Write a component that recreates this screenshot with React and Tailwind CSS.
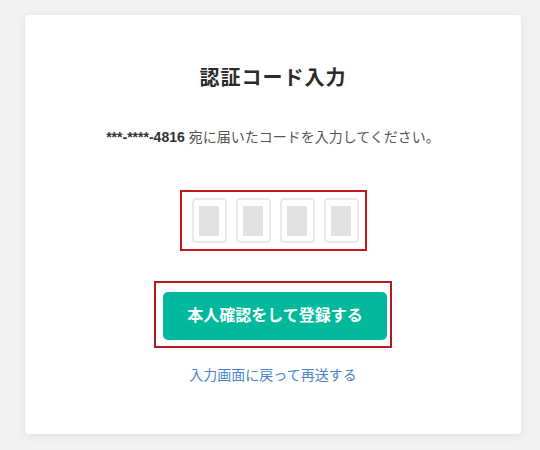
import React from "react";

const jp = { fontFamily: '"Liberation Sans", "Noto Sans CJK JP", sans-serif' };

function CodeBox() {
  return (
    <div className="w-[35px] h-[45px] border-2 border-[#e9e9e9] rounded-[4px] flex items-center justify-center bg-white">
      <div className="w-[20px] h-[30px] bg-[#e2e2e2]"></div>
    </div>
  );
}

export default function App() {
  return (
    <div className="w-[540px] h-[450px] bg-[#f2f2f2] pt-[15px] pl-[25px]" style={jp}>
      <div className="w-[496px] h-[419px] bg-white rounded-[4px] shadow-[0_2px_10px_rgba(0,0,0,0.08)] flex flex-col items-center pt-[49px]">
        <h1 className="text-[20px] leading-[28px] font-bold tracking-[1px] text-[#2b2b2b]">認証コード入力</h1>
        <p className="mt-[35px] text-[14px] leading-[20px] text-[#555]">
          <span className="font-bold text-[#333]">***-****-4816</span> 宛に届いたコードを入力してください。
        </p>
        <div className="mt-[43px] border-2 border-[#c0181c] pl-[10px] pr-[6px] py-[6px] flex gap-[9px]">
          <CodeBox />
          <CodeBox />
          <CodeBox />
          <CodeBox />
        </div>
        <div className="mt-[30px] border-2 border-[#b3191d] pt-[9px] pb-[6px] pl-[7px] pr-[3px]">
          <button className="w-[224px] h-[48px] rounded-[5px] bg-[#00b99d] text-white text-[16px] font-bold">
            本人確認をして登録する
          </button>
        </div>
        <a href="#" className="mt-[17px] text-[14px] leading-[20px] text-[#4a84c9]">
          入力画面に戻って再送する
        </a>
      </div>
    </div>
  );
}
